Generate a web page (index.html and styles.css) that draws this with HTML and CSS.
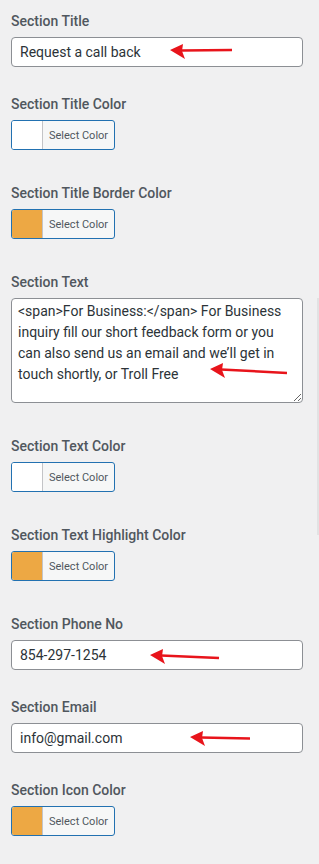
FILE: index.html
```html
<!DOCTYPE html>
<html>
<head>
<meta charset="utf-8">
<link rel="stylesheet" href="styles.css">
</head>
<body>
<div class="panel">
  <div class="field field-text">
    <div class="label">Section Title</div>
    <div class="box">
      <input class="input" type="text" value="Request a call back">
      <svg class="arrow" style="left:158px;top:6px" width="64" height="18" viewBox="0 0 64 18"><polygon points="1,7 14,1 13,8 16,16" /><line x1="12" y1="7.5" x2="63" y2="7" /></svg>
    </div>
  </div>

  <div class="field field-color">
    <div class="label">Section Title Color</div>
    <button class="picker"><span class="swatch swatch-white"></span><span class="picker-text">Select Color</span></button>
  </div>

  <div class="field field-color">
    <div class="label">Section Title Border Color</div>
    <button class="picker"><span class="swatch swatch-orange"></span><span class="picker-text">Select Color</span></button>
  </div>

  <div class="field field-color">
    <div class="label">Section Text</div>
    <div class="box">
      <textarea class="textarea" wrap="off">&lt;span&gt;For Business:&lt;/span&gt; For Business
inquiry fill our short feedback form or you
can also send us an email and we’ll get in
touch shortly, or Troll Free</textarea>
      <svg class="arrow" style="left:198px;top:64px" width="79" height="18" viewBox="0 0 79 18"><polygon points="1,7 14,1 13,8 16,16" /><line x1="12" y1="7.5" x2="78" y2="11" /></svg>
    </div>
  </div>

  <div class="field field-color">
    <div class="label">Section Text Color</div>
    <button class="picker"><span class="swatch swatch-white"></span><span class="picker-text">Select Color</span></button>
  </div>

  <div class="field field-color">
    <div class="label">Section Text Highlight Color</div>
    <button class="picker"><span class="swatch swatch-orange"></span><span class="picker-text">Select Color</span></button>
  </div>

  <div class="field field-text">
    <div class="label">Section Phone No</div>
    <div class="box">
      <input class="input" type="text" value="854-297-1254">
      <svg class="arrow" style="left:138px;top:8px" width="71" height="18" viewBox="0 0 71 18"><polygon points="1,7 14,1 13,8 16,16" /><line x1="12" y1="7.5" x2="70" y2="10" /></svg>
    </div>
  </div>

  <div class="field field-text">
    <div class="label">Section Email</div>
    <div class="box">
      <input class="input" type="text" value="info@gmail.com">
      <svg class="arrow" style="left:178px;top:7px" width="62" height="18" viewBox="0 0 62 18"><polygon points="1,7 14,1 13,8 16,16" /><line x1="12" y1="7.5" x2="61" y2="8.5" /></svg>
    </div>
  </div>

  <div class="field field-color">
    <div class="label">Section Icon Color</div>
    <button class="picker"><span class="swatch swatch-orange"></span><span class="picker-text">Select Color</span></button>
  </div>
</div>
<div class="scroll-line"></div>
</body>
</html>
```

FILE: styles.css
```css
html, body {
  margin: 0;
  padding: 0;
  background: #f0f0f1;
}
body {
  font-family: Roboto, "Liberation Sans", sans-serif;
  width: 319px;
  height: 864px;
  overflow: hidden;
  position: relative;
}
.panel {
  padding: 11px 0 0 11px;
  display: flex;
  flex-direction: column;
}
.field {
  display: flex;
  flex-direction: column;
  align-items: flex-start;
}
.field-text {
  margin-bottom: 27px;
}
.field-color {
  margin-bottom: 33px;
}
.label {
  font-size: 14px;
  line-height: 20px;
  font-weight: 500;
  color: #50575e;
  margin-bottom: 6px;
}
.box {
  position: relative;
}
.input {
  box-sizing: border-box;
  width: 292px;
  height: 30px;
  margin: 0;
  padding: 0 8px;
  border: 1px solid #8c8f94;
  border-radius: 4px;
  background: #fff;
  font-family: Roboto, "Liberation Sans", sans-serif;
  font-size: 14px;
  color: #2c3338;
  outline: none;
}
.textarea {
  box-sizing: border-box;
  display: block;
  width: 292px;
  height: 105px;
  margin: 0;
  padding: 2px 6px;
  border: 1px solid #8c8f94;
  border-radius: 4px;
  background: #fff;
  font-family: Roboto, "Liberation Sans", sans-serif;
  font-size: 14px;
  line-height: 21px;
  color: #2c3338;
  white-space: pre;
  overflow: hidden;
  outline: none;
}
.picker {
  box-sizing: border-box;
  display: flex;
  align-items: stretch;
  width: 104px;
  height: 30px;
  margin: 0;
  padding: 0;
  border: 1px solid #2271b1;
  border-radius: 3px;
  background: #f6f7f7;
  overflow: hidden;
  font-family: Roboto, "Liberation Sans", sans-serif;
}
.swatch {
  width: 30px;
  flex: none;
  border-right: 1px solid #c3c4c7;
}
.swatch-white {
  background: #fff;
}
.swatch-orange {
  background: #eda844;
}
.picker-text {
  display: flex;
  align-items: center;
  padding-left: 6px;
  font-size: 11px;
  color: #50575e;
  white-space: nowrap;
}
.arrow {
  position: absolute;
  overflow: visible;
}
.arrow polygon {
  fill: #e8141b;
}
.arrow line {
  stroke: #e8141b;
  stroke-width: 2.5;
}
.scroll-line {
  position: absolute;
  left: 317px;
  top: 298px;
  width: 2px;
  height: 237px;
  background: #e2e2e3;
}
```
